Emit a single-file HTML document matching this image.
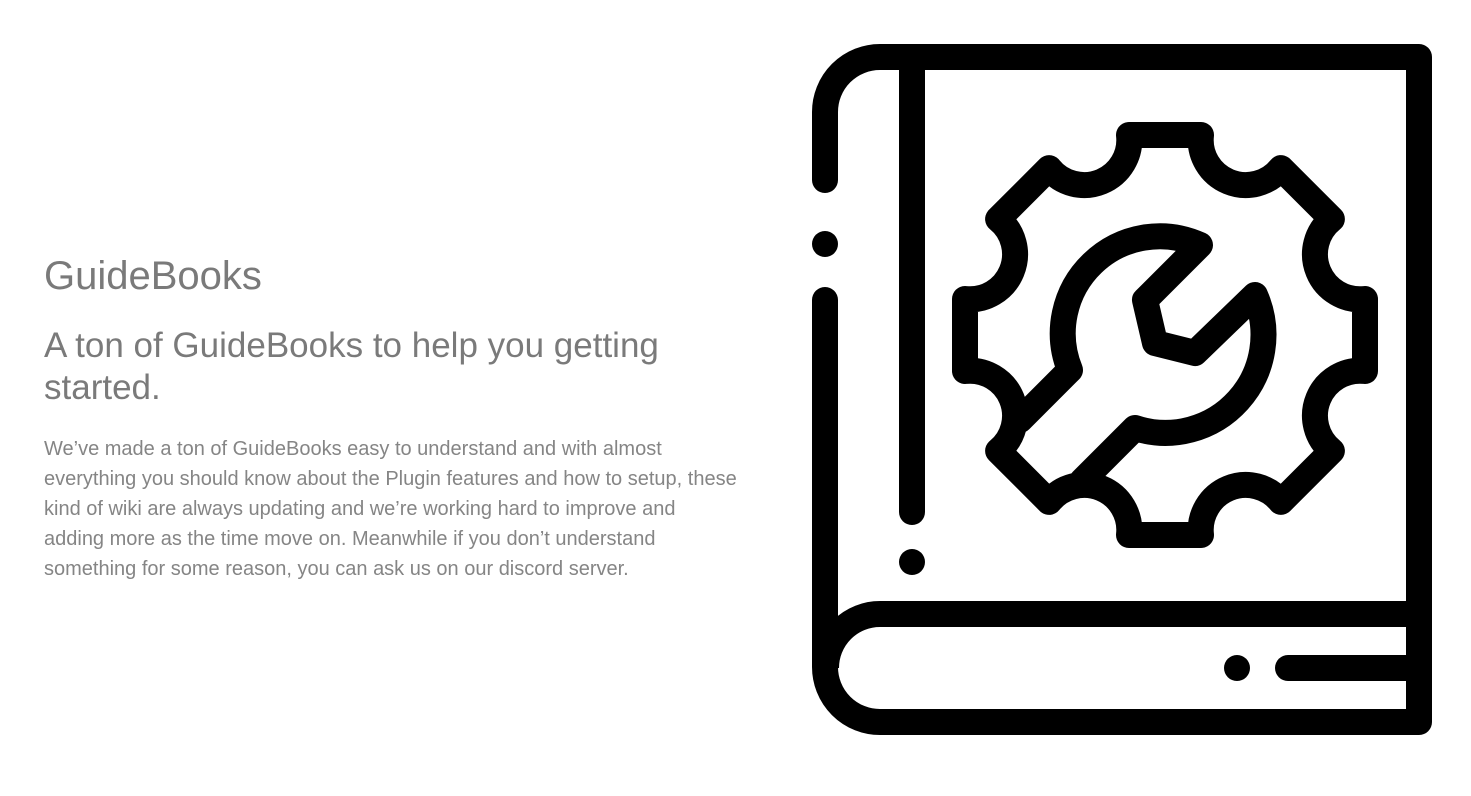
<!DOCTYPE html>
<html><head><meta charset="utf-8"><style>
body{margin:0;width:1471px;height:796px;background:#fff;overflow:hidden;position:relative;font-family:"Liberation Sans",Arial,sans-serif;color:#7a7a7a}
.t{position:absolute;left:44px;white-space:nowrap}
</style></head><body>
<div class="t" style="top:256px;font-size:40px;line-height:40px">GuideBooks</div>
<div class="t" style="top:325px;font-size:35px;line-height:42px">A ton of GuideBooks to help you getting<br>started.</div>
<div class="t" style="top:434px;font-size:20px;line-height:30px;color:#858585">We’ve made a ton of GuideBooks easy to understand and with almost<br>everything you should know about the Plugin features and how to setup, these<br>kind of wiki are always updating and we’re working hard to improve and<br>adding more as the time move on. Meanwhile if you don’t understand<br>something for some reason, you can ask us on our discord server.</div>
<svg width="1471" height="796" style="position:absolute;left:0;top:0" fill="none" stroke="#000" stroke-width="26" stroke-linecap="round" stroke-linejoin="round">
<path d="M825 180 V112 A55 55 0 0 1 880 57 H1419 V722 H880 A55 55 0 0 1 825 667 V300"/>
<path d="M1419 614 H880 A54 54 0 0 0 826 668" stroke-linecap="butt"/>
<path d="M912 70 V512"/>
<path d="M1288 668 H1419"/>
<g fill="#000" stroke="none">
<circle cx="825" cy="244" r="13"/><circle cx="912" cy="562" r="13"/><circle cx="1237" cy="668" r="13"/>
</g>
<path d="M1129 135 H1201 A45 45 0 0 0 1280.9 168.1 L1331.9 219.1 A45 45 0 0 0 1365 299 V371 A45 45 0 0 0 1331.9 450.9 L1280.9 501.9 A45 45 0 0 0 1201 535 H1129 A45 45 0 0 0 1049.1 501.9 L998.1 450.9 A45 45 0 0 0 965 371 V299 A45 45 0 0 0 998.1 219.1 L1049.1 168.1 A45 45 0 0 0 1129 135 Z"/>
<path d="M1020 420 L1070 370 A97 97 0 0 1 1200 245 L1145 300 L1155 343 L1195 353 L1255 295 A98 98 0 0 1 1135 428 L1082 481"/>
</svg>
</body></html>
